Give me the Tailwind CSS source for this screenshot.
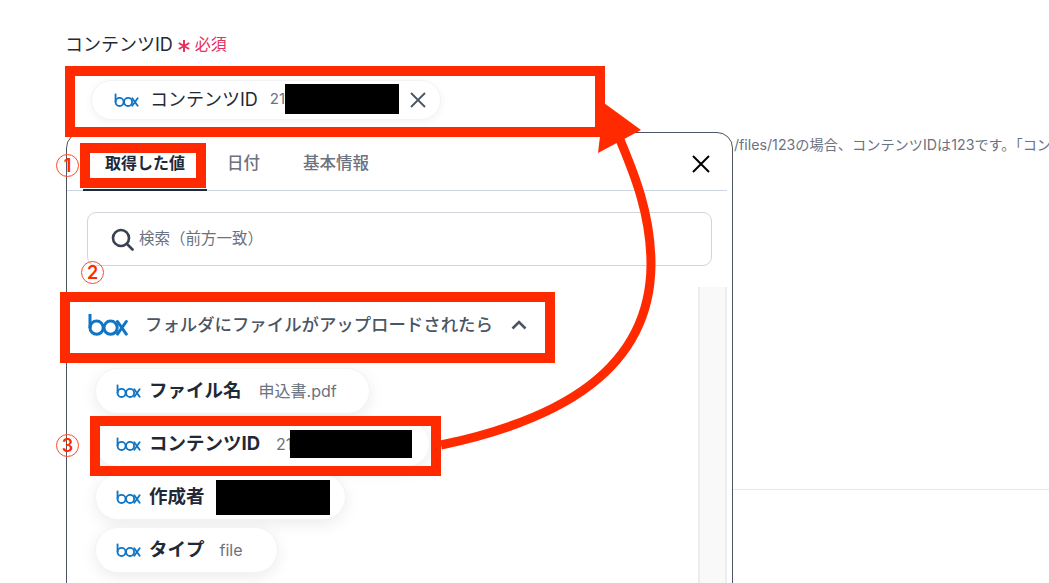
<!DOCTYPE html>
<html lang="ja">
<head>
    <meta charset="UTF-8">
    <meta name="viewport" content="width=device-width, initial-scale=1.0">
    <title>コンテンツID</title>
    <script src="https://cdn.jsdelivr.net/npm/@tailwindcss/browser@4"></script>
</head>
<body class="bg-white font-['Inter','Noto_Sans_CJK_JP',sans-serif]">
    <svg class="hidden">
        <symbol id="box-logo" viewBox="0 0 40 23">
            <g fill="none" stroke="#0f75c4" stroke-width="3">
                <path d="M2 1v14" />
                <circle cx="8.6" cy="14.7" r="6.6" />
                <circle cx="22.6" cy="14.7" r="6.6" />
                <path d="M29.5 8.5l8.8 12.6M38.3 8.5l-8.8 12.6" stroke-linecap="round" />
            </g>
        </symbol>
    </svg>

    <div class="relative w-[1049px] h-[583px] overflow-hidden">
        <!-- form behind the popup -->
        <div class="pl-[65px] pt-[32px]">
            <div class="flex items-center h-[24px] text-[18px] text-[#1f2937]">
                コンテンツID
                <svg class="ml-[5px] w-[12px] h-[12px] mt-[3px]" viewBox="0 0 12 12" fill="none" stroke="#e8305f" stroke-width="2"><path d="M6 0v12M.8 3l10.4 6M11.2 3L.8 9" /></svg>
                <span class="ml-[5px] text-[16px] text-[#e8305f]">必須</span>
            </div>
            <div class="ml-[26px] mt-[24px] flex items-center w-[350px] h-[40px] rounded-full bg-white border border-[#f1f3f5] shadow-[0_2px_8px_rgba(0,0,0,0.05)]">
                <svg class="ml-[22px] w-[25px] h-[14px]"><use href="#box-logo" /></svg>
                <span class="ml-[11px] pb-[2px] text-[18px] text-[#1f2937]">コンテンツID</span>
                <span class="ml-[12px] pb-[2px] text-[15px] text-[#6b7280]">21</span>
                <span class="w-[114px] h-[30px] -mt-[2px] bg-black"></span>
                <svg class="ml-[10px] w-[18px] h-[18px]" viewBox="0 0 18 18" fill="none" stroke="#4b5563" stroke-width="1.8"><path d="M2 2l14 14M16 2L2 16" /></svg>
            </div>
            <p class="mt-[15px] pl-[669px] text-[14.2px] leading-[20px] text-[#6b7280] whitespace-nowrap">/files/123の場合、コンテンツIDは123です。「コンテンツID」</p>
            <div class="ml-[668px] mt-[334px] border-t border-[#e5e7eb]"></div>
        </div>

        <!-- popup -->
        <div class="absolute left-[66px] top-[132px] w-[667px] h-[460px] bg-white border border-[#4b5563] rounded-t-[16px]">
            <div class="relative mr-[5px] h-[58px] flex border-b border-[#cbd5e1] text-[16.5px] font-medium text-[#6b7280]">
                <div class="ml-[16px] w-[124px] pt-[3px] flex justify-center items-center border-b-2 border-[#1f2937] -mb-px text-[16px] font-bold text-[#1f2937]">取得した値</div>
                <div class="ml-[20px] pt-[3px] flex items-center">日付</div>
                <div class="ml-[43px] pt-[3px] flex items-center">基本情報</div>
                <svg class="absolute right-[16px] top-[21px] w-[20px] h-[20px]" viewBox="0 0 20 20" fill="none" stroke="#000" stroke-width="2"><path d="M2 2l16 16M18 2L2 18" /></svg>
            </div>
            <div class="mx-[20px] mt-[21px] h-[54px] flex items-center border border-[#d1d5db] rounded-[9px]">
                <svg class="ml-[23px] w-[23px] h-[23px]" viewBox="0 0 23 23" fill="none" stroke="#374151" stroke-width="2.6" stroke-linecap="round"><circle cx="10" cy="10" r="8" /><path d="M16 16l5.5 5.5" /></svg>
                <span class="ml-[5px] text-[15.5px] text-[#6b7280]">検索（前方一致）</span>
            </div>
            <div class="flex mt-[21px]">
                <div class="w-[631px]">
                    <div class="flex items-center h-[50px] mt-[13px] pl-[21px]">
                        <svg class="w-[40px] h-[23px] -mt-[1px]"><use href="#box-logo" /></svg>
                        <span class="ml-[17px] text-[17.4px] font-medium text-[#4b5563]">フォルダにファイルがアップロードされたら</span>
                        <svg class="ml-[18px] w-[16px] h-[10px]" viewBox="0 0 16 10" fill="none" stroke="#4b5563" stroke-width="2.6"><path d="M1.5 8.5L8 2l6.5 6.5" /></svg>
                    </div>
                    <div class="flex flex-col items-start gap-[7px] mt-[18px] pl-[28px]">
                        <div class="flex items-center h-[46px] w-[275px] rounded-full bg-white border border-[#f3f4f6] shadow-[0_4px_16px_rgba(0,0,0,0.08)]">
                            <svg class="ml-[20px] w-[25px] h-[14px]"><use href="#box-logo" /></svg>
                            <span class="ml-[8px] text-[18.5px] font-bold text-[#1f2937]">ファイル名</span>
                            <span class="ml-[17px] text-[16px] text-[#6b7280]">申込書.pdf</span>
                        </div>
                        <div class="flex items-center h-[46px] w-[335px] rounded-full bg-white border border-[#f3f4f6] shadow-[0_4px_16px_rgba(0,0,0,0.08)]">
                            <svg class="ml-[20px] w-[25px] h-[14px]"><use href="#box-logo" /></svg>
                            <span class="ml-[8px] text-[18.5px] font-bold text-[#1f2937]">コンテンツID</span>
                            <span class="ml-[16px] text-[16px] text-[#6b7280]">21</span>
                            <span class="-ml-[2px] w-[122px] h-[28px] bg-black"></span>
                        </div>
                        <div class="flex items-center h-[46px] w-[251px] rounded-full bg-white border border-[#f3f4f6] shadow-[0_4px_16px_rgba(0,0,0,0.08)]">
                            <svg class="ml-[20px] w-[25px] h-[14px]"><use href="#box-logo" /></svg>
                            <span class="ml-[8px] text-[18.5px] font-bold text-[#1f2937]">作成者</span>
                            <span class="ml-[11px] w-[114px] h-[35px] bg-black"></span>
                        </div>
                        <div class="flex items-center h-[46px] w-[183px] rounded-full bg-white border border-[#f3f4f6] shadow-[0_4px_16px_rgba(0,0,0,0.08)]">
                            <svg class="ml-[20px] w-[25px] h-[14px]"><use href="#box-logo" /></svg>
                            <span class="ml-[8px] text-[18.5px] font-bold text-[#1f2937]">タイプ</span>
                            <span class="ml-[15px] text-[16px] text-[#6b7280]">file</span>
                        </div>
                    </div>
                </div>
                <!-- scrollbar track -->
                <div class="w-[29px] h-[300px] bg-[#f9f9f9] border-x-2 border-[#ededed]"></div>
            </div>
        </div>

        <!-- red annotations -->
        <div class="absolute left-[65px] top-[66px] w-[540px] h-[71px] border-[10px] border-[#ff2a00]"></div>
        <div class="absolute left-[80px] top-[143px] w-[126px] h-[45px] border-[10px] border-[#ff2a00]"></div>
        <div class="absolute left-[60px] top-[292px] w-[495px] h-[71px] border-[10px] border-[#ff2a00]"></div>
        <div class="absolute left-[90px] top-[416px] w-[351px] h-[60px] border-[10px] border-[#ff2a00]"></div>
        <span class="absolute left-[56px] top-[154px] flex items-center justify-center w-[23px] h-[23px] rounded-full border border-[#ff4a20] text-[18px] font-semibold leading-none text-[#ff2a00]">1</span>
        <span class="absolute left-[81px] top-[261px] flex items-center justify-center w-[23px] h-[23px] rounded-full border border-[#ff4a20] text-[18px] font-semibold leading-none text-[#ff2a00]">2</span>
        <span class="absolute left-[56px] top-[434px] flex items-center justify-center w-[23px] h-[23px] rounded-full border border-[#ff4a20] text-[18px] font-semibold leading-none text-[#ff2a00]">3</span>
        <svg class="absolute inset-0 w-[1049px] h-[583px] pointer-events-none" viewBox="0 0 1049 583">
            <path d="M441 445C560 420 650 370 651 265C651 215 635 175 618 135" fill="none" stroke="#ff2a00" stroke-width="9" />
            <path d="M604 103L641 130L598 153Z" fill="#ff2a00" />
        </svg>
    </div>
</body>
</html>
